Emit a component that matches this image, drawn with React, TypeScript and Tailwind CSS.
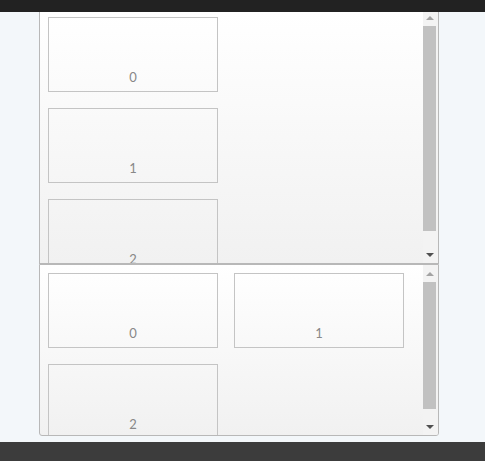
function Scroller({ lift, thumbHeight }: { lift: boolean; thumbHeight: number }) {
    return (
        <div className="w-[15px] shrink-0 flex flex-col items-start bg-[#f3f3f3]">
            <div className={lift ? "h-[17px] w-[14px] -mt-[3px] flex items-center justify-center" : "h-[17px] w-[14px] flex items-center justify-center"}>
                <div className="w-0 h-0 border-x-[4px] border-x-transparent border-b-[4px] border-b-[#a3a3a3]" />
            </div>
            <div className="w-[13px] bg-[#c1c1c1]" style={{ height: thumbHeight }} />
            <div className="flex-1" />
            <div className="h-[17px] w-[14px] flex items-center justify-center">
                <div className="w-0 h-0 border-x-[4px] border-x-transparent border-t-[4px] border-t-[#505050]" />
            </div>
        </div>
    )
}

function Tile({ n }: { n: number }) {
    return (
        <div className="w-[170px] h-[75px] shrink-0 border border-[#c4c4c4] flex items-end justify-center pb-[6px] text-[13px] leading-[16px] text-[#888]">
            {n}
        </div>
    )
}

export default function App() {
    return (
        <div className="w-[485px] h-[461px] flex flex-col bg-[#f3f7fa] overflow-hidden" style={{ fontFamily: "Lato, 'Open Sans', sans-serif" }}>
            <div className="h-[12px] shrink-0 bg-[#222]" />
            <div className="h-[430px] shrink-0 pl-[39px] flex flex-col">
                <div className="w-[400px] h-[252px] shrink-0 border-x border-b border-[#b8b8b8] bg-gradient-to-b from-white to-[#f1f1f1] flex overflow-hidden">
                    <div className="flex-1 pl-[8px] pt-[5px] flex flex-col gap-4 overflow-hidden">
                        <Tile n={0} />
                        <Tile n={1} />
                        <Tile n={2} />
                    </div>
                    <Scroller lift thumbHeight={205} />
                </div>
                <div className="w-[400px] h-[172px] shrink-0 border border-[#b8b8b8] rounded-b-[3px] bg-gradient-to-b from-white to-[#f1f1f1] flex overflow-hidden">
                    <div className="flex-1 pl-[8px] pt-[8px] grid grid-cols-[170px_170px] auto-rows-[75px] gap-4 overflow-hidden">
                        <Tile n={0} />
                        <Tile n={1} />
                        <Tile n={2} />
                    </div>
                    <Scroller lift={false} thumbHeight={127} />
                </div>
            </div>
            <div className="flex-1 bg-[#3c3c3c]" />
        </div>
    )
}
